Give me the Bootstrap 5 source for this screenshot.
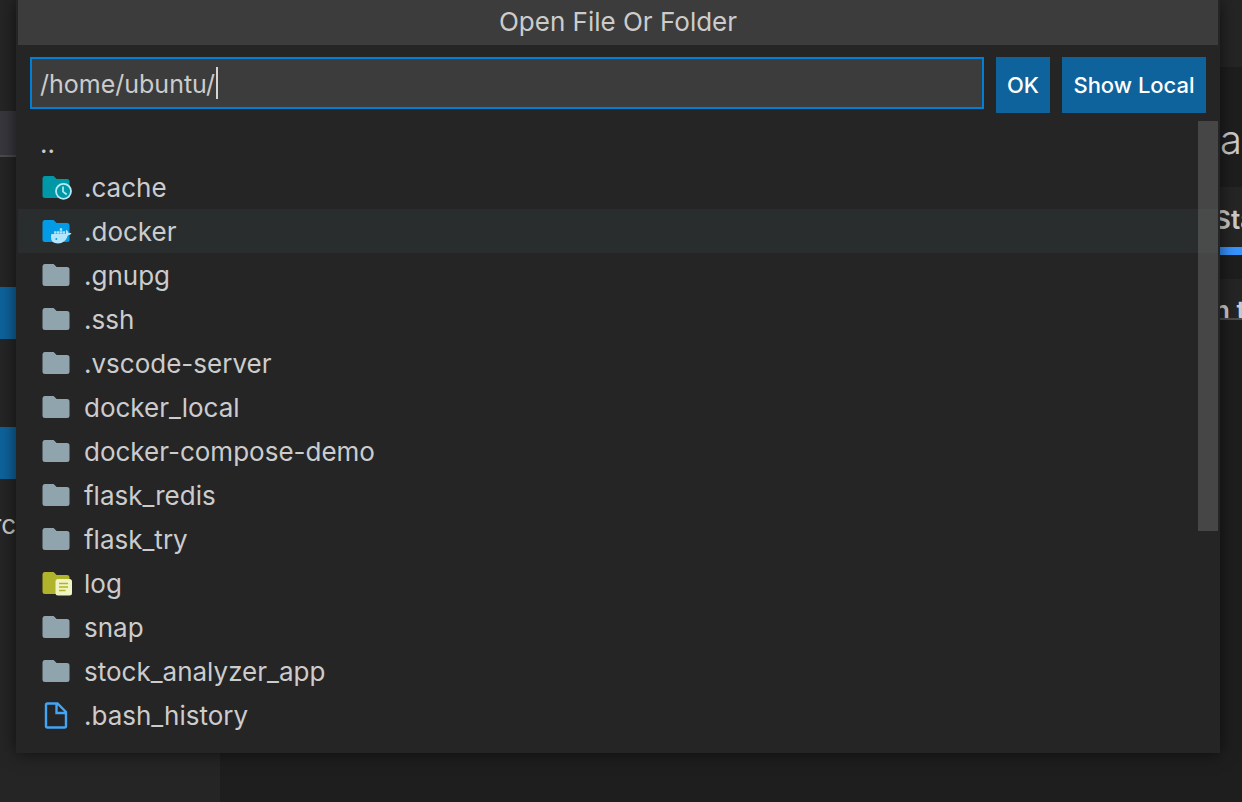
<!DOCTYPE html>
<html lang="en">
<head>
<meta charset="utf-8">
<meta name="viewport" content="width=device-width, initial-scale=1">
<title>Open File Or Folder</title>
<link href="https://cdn.jsdelivr.net/npm/bootstrap@5.3.0/dist/css/bootstrap.min.css" rel="stylesheet">
<style>
body{background:#1e1e1e;color:#ccc;font-family:Inter,"Liberation Sans",sans-serif;font-size:26px;line-height:44px}
.side{width:220px;background:#252526;padding-top:111px}
.side-item{height:46px;background:#37373d;border-bottom:2px solid #4b4b4b}
.side-btn{height:52px;background:#0e639c;border:0;color:#fff}
.side-gap-a{margin-top:130px}.side-gap-b{margin-top:88px}
.side-note{margin:24px 0 0 -8px}
.strip{width:28px}
.strip-tabs{height:67px;background:#252526}
.strip-title{height:120px;font-size:40px;font-weight:300;line-height:146px}
.strip-card{height:68px;background:#252526;border-bottom:8px solid #3794ff;font-weight:600;line-height:66px}
.strip-foot{height:41px;margin-top:24px;background:#252526;border-bottom:2px solid #4b4b4b;font-weight:600;line-height:64px}
.quick{left:16px;right:22px;padding:0 2px 16px;background:#252526;box-shadow:0 0 16px rgba(0,0,0,.6)}
.quick-title{height:45px;padding-bottom:2px;background:#3c3c3c;font-size:26px;font-weight:400}
.quick-bar{padding:12px 12px 8px;gap:12px}
.path-box,.path-box:focus{height:52px;padding:2px 8px 0;border:2px solid #007fd4;background:#3c3c3c;color:#ccc;font-size:25px;box-shadow:none}
.caret{left:186px;top:10px;width:2px;height:32px;background:#d4d4d4}
.act{height:56px;background:#0e639c;color:#fff;font-size:22px;font-weight:500}
.act-ok{width:54px}.act-local{width:144px}
.entry{height:44px;padding:2px 22px 0;gap:12px;color:#ccc;text-decoration:none}
.entry:hover{color:#fff}
.entry.hot{background:#2a2d2e}
.entry svg{width:32px;height:32px;flex:none}
.thumb{top:0;right:0;width:20px;height:410px;background:rgba(121,121,121,.4)}
</style>
</head>
<body class="vh-100 overflow-hidden">
<svg class="d-none" aria-hidden="true">
<symbol id="folder-shape" viewBox="0 0 32 32"><path d="M4.600 4h9l3 3H27q2.500 0 2.500 2.500V23.500q0 2.500-2.500 2.500H5q-2.500 0-2.500-2.500V6.500Q2.500 4 4.600 4z"/></symbol>
<symbol id="folder" viewBox="0 0 32 32"><use href="#folder-shape" fill="#90a4ae"/></symbol>
<symbol id="cache" viewBox="0 0 32 32"><use href="#folder-shape" fill="#0097a7"/><circle cx="23.500" cy="19.300" r="7.500" fill="#0097a7" stroke="#b2ebf2" stroke-width="1.800"/><path d="M23 14.500v5.200l3.700 2.800" fill="none" stroke="#b2ebf2" stroke-width="1.700"/></symbol>
<symbol id="docker" viewBox="0 0 32 32"><use href="#folder-shape" fill="#039be5"/><path fill="#b3e5fc" d="M19.800 12.300h2.400v2.400h-2.400zM14.100 15.300h2.400v2.400h-2.400zM17 15.300h2.400v2.400H17zM19.800 15.300h2.400v2.400h-2.400zM11.300 18.100h13.900q1-.4.700-1.800-.4-1.500.6-2.600 1.800 1.300 1.700 3 2-.3 3.300.6-1.100 2-3.500 1.900Q25.300 27.500 18 27.500q-7.300 0-7-6.900zM22.600 15.300H25v2.400h-2.400z"/><circle cx="16.300" cy="23" r=".9" fill="#039be5"/></symbol>
<symbol id="log" viewBox="0 0 32 32"><use href="#folder-shape" fill="#afb42b"/><rect x="15.500" y="11" width="16.500" height="16.500" rx="2.500" fill="#f0f4c3"/><path d="M19 15.500h9M19 19h9M19 22.500h6.500" stroke="#afb42b" stroke-width="1.600"/></symbol>
<symbol id="file" viewBox="0 0 32 32"><path d="M7.500 3.500h10L26 12v14q0 1.500-1.500 1.500h-17Q6 27.500 6 26V5q0-1.500 1.500-1.500zM16.500 3.500V13H26" fill="none" stroke="#42a5f5" stroke-width="2.400"/></symbol>
</svg>
<div class="d-flex justify-content-between h-100">
<aside class="side overflow-hidden">
<div class="side-item"></div>
<button class="side-btn side-gap-a d-block w-100" type="button" aria-label="Open"></button>
<button class="side-btn side-gap-b d-block w-100" type="button" aria-label="Clone"></button>
<p class="side-note">rc</p>
</aside>
<main class="strip text-nowrap overflow-hidden">
<div class="strip-tabs"></div>
<div class="strip-title d-flex justify-content-end">ta</div>
<div class="strip-card">Sta</div>
<div class="strip-foot overflow-hidden">n t</div>
</main>
</div>
<section class="quick position-absolute top-0" role="dialog" aria-labelledby="dlg">
<h1 class="quick-title d-flex align-items-center justify-content-center m-0" id="dlg">Open File Or Folder</h1>
<form class="quick-bar d-flex align-items-start">
<div class="position-relative flex-grow-1">
<input class="path-box form-control rounded-0" type="text" aria-label="Path" value="/home/ubuntu/"><span class="caret position-absolute"></span>
</div>
<button class="act act-ok btn rounded-0 border-0 p-0" type="button">OK</button>
<button class="act act-local btn rounded-0 border-0 p-0" type="button">Show Local</button>
</form>
<nav class="position-relative">
<a class="entry d-flex align-items-center" href="#">..</a>
<a class="entry d-flex align-items-center" href="#"><svg><use href="#cache"/></svg>.cache</a>
<a class="entry hot d-flex align-items-center" href="#"><svg><use href="#docker"/></svg>.docker</a>
<a class="entry d-flex align-items-center" href="#"><svg><use href="#folder"/></svg>.gnupg</a>
<a class="entry d-flex align-items-center" href="#"><svg><use href="#folder"/></svg>.ssh</a>
<a class="entry d-flex align-items-center" href="#"><svg><use href="#folder"/></svg>.vscode-server</a>
<a class="entry d-flex align-items-center" href="#"><svg><use href="#folder"/></svg>docker_local</a>
<a class="entry d-flex align-items-center" href="#"><svg><use href="#folder"/></svg>docker-compose-demo</a>
<a class="entry d-flex align-items-center" href="#"><svg><use href="#folder"/></svg>flask_redis</a>
<a class="entry d-flex align-items-center" href="#"><svg><use href="#folder"/></svg>flask_try</a>
<a class="entry d-flex align-items-center" href="#"><svg><use href="#log"/></svg>log</a>
<a class="entry d-flex align-items-center" href="#"><svg><use href="#folder"/></svg>snap</a>
<a class="entry d-flex align-items-center" href="#"><svg><use href="#folder"/></svg>stock_analyzer_app</a>
<a class="entry d-flex align-items-center" href="#"><svg><use href="#file"/></svg>.bash_history</a>
<div class="thumb position-absolute"></div>
</nav>
</section>
<script src="https://cdn.jsdelivr.net/npm/bootstrap@5.3.0/dist/js/bootstrap.bundle.min.js"></script>
</body>
</html>
